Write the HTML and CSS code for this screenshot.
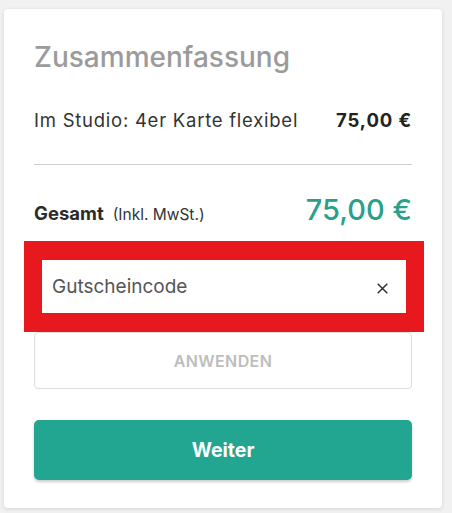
FILE: index.html
```html
<!DOCTYPE html>
<html lang="de">
<head>
<meta charset="utf-8">
<link rel="stylesheet" href="styles.css">
</head>
<body>
<div class="card">
  <h2 class="title">Zusammenfassung</h2>
  <div class="row item">
    <span class="item-name">Im Studio: 4er Karte flexibel</span>
    <span class="item-price">75,00 €</span>
  </div>
  <hr class="divider">
  <div class="row total">
    <span class="total-label"><b>Gesamt</b><span class="tax">(Inkl. MwSt.)</span></span>
    <span class="total-price">75,00 €</span>
  </div>
  <div class="voucher">
    <div class="field">
      <span class="placeholder">Gutscheincode</span>
      <svg class="clear" width="11" height="11" viewBox="0 0 11 11"><path d="M0.7 0.7L10.3 10.3M10.3 0.7L0.7 10.3" stroke="#333" stroke-width="1.5" fill="none"/></svg>
    </div>
    <div class="highlight"></div>
  </div>
  <button class="apply">ANWENDEN</button>
  <button class="next">Weiter</button>
</div>
</body>
</html>
```
FILE: styles.css
```css
html, body {
  margin: 0;
  padding: 0;
}
body {
  background: #f1f1f1;
  font-family: "Inter", "Liberation Sans", sans-serif;
  padding: 9px 10px 5px 4px;
}
.card {
  background: #fff;
  border-radius: 4px;
  box-shadow: 0 1px 4px rgba(0,0,0,0.12);
  padding: 31px 30px 28px 30px;
}
.title {
  margin: 0;
  font-size: 28px;
  line-height: 34px;
  font-weight: 500;
  color: #9b9b9b;
}
.row {
  display: flex;
  justify-content: space-between;
  align-items: baseline;
}
.item {
  margin-top: 34px;
  height: 24px;
  font-size: 18.5px;
  line-height: 24px;
  color: #333;
}
.item-name {
  letter-spacing: 0.75px;
}
.item-price {
  font-weight: 700;
  color: #222;
  letter-spacing: 0.9px;
}
.divider {
  border: 0;
  border-top: 1px solid #cfcfcf;
  margin: 32px 0 0 0;
}
.total {
  margin-top: 27px;
  height: 36px;
  line-height: 36px;
}
.total-label b {
  font-size: 18.5px;
  font-weight: 700;
  color: #2b2b2b;
}
.tax {
  font-size: 15.5px;
  color: #333;
  margin-left: 9px;
}
.total-price {
  font-size: 29px;
  color: #2aa08b;
  font-weight: 500;
}
.voucher {
  position: relative;
  margin-top: 22px;
}
.field {
  height: 72px;
  border: 1px solid #ccc;
  border-radius: 4px;
  display: flex;
  align-items: center;
  justify-content: space-between;
  padding: 0 23px 0 17px;
  box-sizing: border-box;
}
.placeholder {
  font-size: 19px;
  color: #555;
}
.clear {
  margin-top: 4px;
}
.highlight {
  position: absolute;
  left: -10px;
  top: -9px;
  width: 400px;
  height: 91px;
  box-sizing: border-box;
  border: solid #e8191e;
  border-width: 19px 18px;
}
.apply {
  display: block;
  width: 100%;
  height: 57px;
  margin-top: 10px;
  background: #fff;
  border: 1px solid #dedede;
  border-radius: 4px;
  font-family: inherit;
  font-size: 16px;
  letter-spacing: 0.4px;
  font-weight: 600;
  color: #bdbdbd;
}
.next {
  display: block;
  width: 100%;
  height: 60px;
  margin-top: 31px;
  background: #22a591;
  border: 0;
  border-radius: 5px;
  box-shadow: 0 2px 3px rgba(0,0,0,0.2);
  font-family: inherit;
  font-size: 19.5px;
  font-weight: 700;
  color: #fff;
}
```
